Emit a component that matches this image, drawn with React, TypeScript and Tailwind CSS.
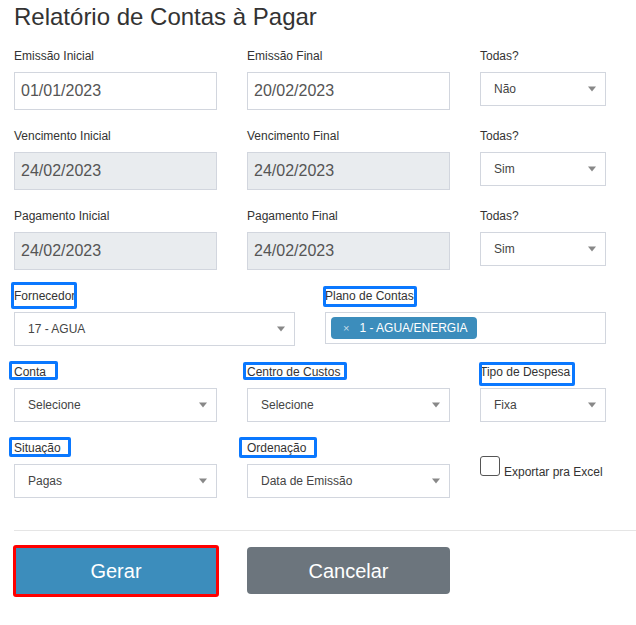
import { ReactNode } from "react";

type Box = { l: number; t: number; w: number; h: number };

// caixas azuis de destaque em volta de alguns rótulos
const Label = ({ text, box }: { text: string; box?: Box }) => (
  <div className="relative h-[19px] pt-[2px] text-[12px] leading-[17px] text-[#333] whitespace-nowrap">
    {text}
    {box && (
      <span
        className="absolute border-[3px] border-[#0a78ff] rounded-[2px] pointer-events-none"
        style={{ left: box.l, top: box.t, width: box.w, height: box.h }}
      />
    )}
  </div>
);

const DateInput = ({ value, disabled }: { value: string; disabled?: boolean }) => (
  <div
    className={`mt-[7px] h-[38px] flex items-center pl-[6px] border border-[#d2d6de] text-[16px] text-[#555] ${
      disabled ? "bg-[#e9ecef]" : "bg-white"
    }`}
  >
    {value}
  </div>
);

const Arrow = () => (
  <span className="absolute right-[9px] top-1/2 -translate-y-1/2 w-0 h-0 border-l-[4px] border-r-[4px] border-t-[5px] border-l-transparent border-r-transparent border-t-[#888]" />
);

const Select = ({ value }: { value: string }) => (
  <div className="relative mt-[7px] h-[34px] flex items-center pl-[13px] border border-[#d2d6de] bg-white text-[12px] text-[#444]">
    {value}
    <Arrow />
  </div>
);

const Field = ({ children }: { children: ReactNode }) => <div>{children}</div>;

export default function App() {
  return (
    <div className="w-[636px] min-h-[625px] bg-white font-['Liberation_Sans',Arial,sans-serif] overflow-hidden">
      <div className="pl-[14px] pt-[4px]">
        <h1 className="text-[24px] leading-[26px] text-[#333]">Relatório de Contas à Pagar</h1>

        {/* datas */}
        <div className="mt-[16px] grid grid-cols-[203px_203px_126px] gap-x-[30px] gap-y-[16px]">
          <Field>
            <Label text="Emissão Inicial" />
            <DateInput value="01/01/2023" />
          </Field>
          <Field>
            <Label text="Emissão Final" />
            <DateInput value="20/02/2023" />
          </Field>
          <Field>
            <Label text="Todas?" />
            <Select value="Não" />
          </Field>

          <Field>
            <Label text="Vencimento Inicial" />
            <DateInput value="24/02/2023" disabled />
          </Field>
          <Field>
            <Label text="Vencimento Final" />
            <DateInput value="24/02/2023" disabled />
          </Field>
          <Field>
            <Label text="Todas?" />
            <Select value="Sim" />
          </Field>

          <Field>
            <Label text="Pagamento Inicial" />
            <DateInput value="24/02/2023" disabled />
          </Field>
          <Field>
            <Label text="Pagamento Final" />
            <DateInput value="24/02/2023" disabled />
          </Field>
          <Field>
            <Label text="Todas?" />
            <Select value="Sim" />
          </Field>
        </div>

        {/* fornecedor / plano */}
        <div className="mt-[16px] grid grid-cols-[281px_281px] gap-x-[30px]">
          <Field>
            <Label text="Fornecedor" box={{ l: -3, t: -4, w: 66, h: 27 }} />
            <Select value="17 - AGUA" />
          </Field>
          <Field>
            <Label text="Plano de Contas" box={{ l: -2, t: 0, w: 94, h: 21 }} />
            <div className="mt-[7px] h-[32px] flex items-center pl-[5px] border border-[#d2d6de] bg-white">
              <span className="h-[22px] flex items-center pl-[12px] pr-[10px] rounded-[4px] bg-[#3c8dbc] text-white text-[12px]">
                <span className="text-white/70 text-[11px] mr-[10px]">×</span>
                1 - AGUA/ENERGIA
              </span>
            </div>
          </Field>
        </div>

        <div className="mt-[16px] grid grid-cols-[203px_203px_126px] gap-x-[30px] gap-y-[16px]">
          <Field>
            <Label text="Conta" box={{ l: -5, t: -1, w: 49, h: 19 }} />
            <Select value="Selecione" />
          </Field>
          <Field>
            <Label text="Centro de Custos" box={{ l: -4, t: 0, w: 104, h: 18 }} />
            <Select value="Selecione" />
          </Field>
          <Field>
            <Label text="Tipo de Despesa" box={{ l: -1, t: 0, w: 96, h: 24 }} />
            <Select value="Fixa" />
          </Field>

          <Field>
            <Label text="Situação" box={{ l: -5, t: -1, w: 62, h: 20 }} />
            <Select value="Pagas" />
          </Field>
          <Field>
            <Label text="Ordenação" box={{ l: -8, t: -1, w: 78, h: 21 }} />
            <Select value="Data de Emissão" />
          </Field>
          <Field>
            <label className="mt-[18px] flex items-end gap-[4px] text-[12px] text-[#333]">
              <span className="w-[20px] h-[20px] border border-[#555] rounded-[3px] bg-white shrink-0" />
              <span className="leading-[14px] -mb-[3px]">Exportar pra Excel</span>
            </label>
          </Field>
        </div>

        <hr className="mt-[32px] border-0 border-t border-[#e5e5e5]" />

        <div className="mt-[14px] -ml-px flex items-start">
          <button className="w-[206px] h-[52px] border-[3px] border-[#ff0000] rounded-[3px] bg-[#3c8dbc] text-white text-[20px]">
            Gerar
          </button>
          <button className="ml-[28px] mt-[2px] w-[203px] h-[47px] rounded-[4px] bg-[#6c757d] text-white text-[20px]">
            Cancelar
          </button>
        </div>
      </div>
    </div>
  );
}
